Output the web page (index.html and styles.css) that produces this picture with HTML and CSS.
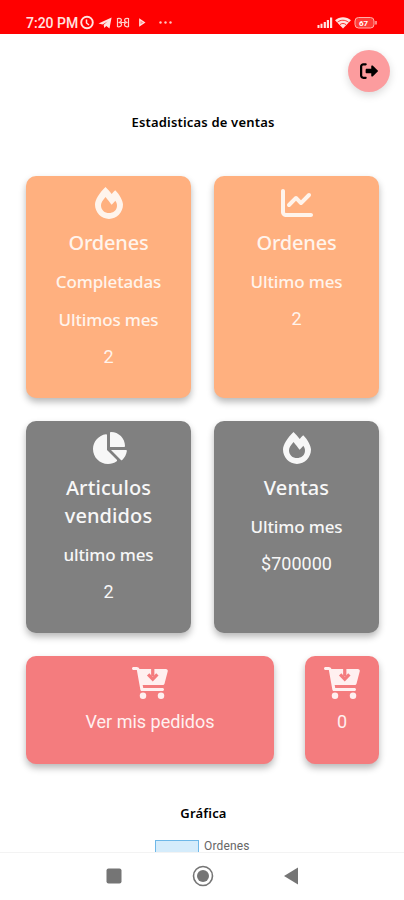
FILE: index.html
```html
<!DOCTYPE html>
<html lang="es">
<head>
<meta charset="utf-8">
<title>Estadisticas de ventas</title>
<link rel="stylesheet" href="styles.css">
</head>
<body>
<svg class="defs" width="0" height="0">
  <symbol id="fire" viewBox="0 0 448 512"><path fill-rule="evenodd" d="M323.5 51.25C302.8 70.5 284 90.75 267.4 111.1C240.1 73.62 206.2 35.5 168 0C69.75 91.12 0 210 0 281.6C0 408.9 100.2 512 224 512s224-103.1 224-230.4C448 228.4 396 118.5 323.5 51.25zM304.1 391.9C282.4 407 255.8 416 226.9 416c-72.13 0-130.9-47.73-130.9-125.2c0-38.63 24.24-72.64 72.74-130.8c7 8 98.88 125.4 98.88 125.4l58.63-66.88c4.125 6.75 7.867 13.52 11.24 19.9C364.9 290.6 353.4 357.4 304.1 391.9z"/></symbol>
  <symbol id="line" viewBox="0 0 512 512"><path d="M64 400C64 408.8 71.16 416 80 416H480C497.7 416 512 430.3 512 448C512 465.7 497.7 480 480 480H80C35.82 480 0 444.2 0 400V64C0 46.33 14.33 32 32 32C49.67 32 64 46.33 64 64V400zM342.6 278.6C330.1 291.1 309.9 291.1 297.4 278.6L240 221.3L150.6 310.6C138.1 323.1 117.9 323.1 105.4 310.6C92.88 298.1 92.88 277.9 105.4 265.4L217.4 153.4C229.9 140.9 250.1 140.9 262.6 153.4L320 210.7L425.4 105.4C437.9 92.88 458.1 92.88 470.6 105.4C483.1 117.9 483.1 138.1 470.6 150.6L342.6 278.6z"/></symbol>
  <symbol id="pie" viewBox="0 0 576 512"><path d="M304 16.58C304 7.555 310.1 0 320 0C443.7 0 544 100.3 544 224C544 233 536.4 240 527.4 240H304V16.58zM32 272C32 150.7 122.1 50.03 239.1 34.25C248.4 32.99 256 40.36 256 49.66V288L412.5 444.5C419.2 451.2 418.7 462.2 411 467.7C371.8 495.6 323.8 512 272 512C139.5 512 32 404.6 32 272zM558.4 288C567.6 288 575 295.6 573.8 304.9C566.1 360.9 539.1 410.6 499.9 447.3C493.9 452.1 484.5 452.5 478.7 446.7L320 288H558.4z"/></symbol>
  <symbol id="cart" viewBox="0 0 576 512"><path d="M0 24C0 10.700 10.700 0 24 0H76c20 0 38 12 43 32h422c22 0 35 16 31 34l-52 200c-4 14-16 22-30 22H170.700l9 48H488c13.300 0 24 10.700 24 24s-10.700 24-24 24H158c-12 0-21-8-24-20L77.400 48H24C10.700 48 0 37.300 0 24z"/><circle cx="176" cy="460" r="52"/><circle cx="464" cy="460" r="52"/><path class="cart-arrow" d="M332 26V150"/><path class="cart-arrow" d="M258 118l74 76 74-76"/></symbol>
</svg>

<header class="status">
  <span class="clock">7:20 PM</span>
  <svg class="left-icons" width="98" height="16" viewBox="0 0 98 16">
    <circle cx="8" cy="7.500" r="5.800" fill="none" stroke="#ffe3e0" stroke-width="1.900"/>
    <path d="M7.500 4.500V8l2.500 2" fill="none" stroke="#ffe3e0" stroke-width="1.500"/>
    <path d="M19.500 8.400 32.600 2.500 30.500 13.400 27.300 11 25.300 13 24.600 9.800 28.800 6.200 23.600 9.600z" fill="#ffe3e0"/>
    <path d="M38.500 3v9M38.500 3.500c5-1 5 3.500 1 4 4.500 0 4 5-1 4.200M49.500 3v9M49.500 3.500c-5-1-5 3.500-1 4-4.500 0-4 5 1 4.200M42 7.500h4" fill="none" stroke="#ffd0cc" stroke-width="1.200"/>
    <path d="M60.800 4.500v6l4.500-3z" fill="#ff8d88" stroke="#ffe3e0" stroke-width="1.300"/>
    <g fill="#ffc5c0"><circle cx="81.500" cy="7.500" r="1.200"/><circle cx="86.500" cy="7.500" r="1.200"/><circle cx="91.500" cy="7.500" r="1.200"/></g>
  </svg>
  <svg class="right-icons" width="62" height="16" viewBox="0 0 62 16">
    <g fill="#ffe3e0"><path d="M.5 10h2v3h-2zM3.500 8.800h2V13h-2zM6.700 7h2.200v6H6.700zM9.800 5H12v8H9.800zM13 2.500h2.200V13H13z"/>
    <path d="M18 5.200C22.500 1.200 29.500 1.200 34 5.200L26 13.500z"/></g>
    <path d="M20.500 7.200c3-2.600 7.500-2.600 11 0M23 9.600c1.800-1.500 4-1.500 6 0" fill="none" stroke="#f00" stroke-width=".8"/>
    <rect x="38" y="2.500" width="19" height="10.500" rx="3.500" fill="#ff3a35" stroke="#ffb0aa"/>
    <path d="M59 6v3.500" stroke="#ffb0aa" stroke-width="1.500"/>
    <text x="46.500" y="11" text-anchor="middle" class="battery">67</text>
  </svg>
</header>

<main class="page">
  <button class="logout" aria-label="Salir">
    <svg width="18" height="18" viewBox="0 0 512 512"><path d="M96 480h64c17.700 0 32-14.300 32-32s-14.300-32-32-32H96c-17.700 0-32-14.300-32-32V128c0-17.700 14.300-32 32-32h64c17.700 0 32-14.300 32-32s-14.300-32-32-32H96C43 32 0 75 0 128V384c0 53 43 96 96 96zM504.500 273.400c4.800-4.500 7.500-10.800 7.500-17.400s-2.700-12.900-7.500-17.400l-144-136c-7-6.600-17.200-8.400-26-4.600s-14.500 12.500-14.500 22v72H192c-17.700 0-32 14.300-32 32v64c0 17.700 14.300 32 32 32H320v72c0 9.600 5.700 18.200 14.500 22s19 2 26-4.600l144-136z"/></svg>
  </button>
  <h1 class="title">Estadisticas de ventas</h1>

  <section class="grid">
    <article class="card orange">
      <svg class="icon" width="28" height="32"><use href="#fire"/></svg>
      <h2>Ordenes</h2>
      <h3>Completadas</h3>
      <h3>Ultimos mes</h3>
      <p>2</p>
    </article>
    <article class="card orange">
      <svg class="icon" width="32" height="32"><use href="#line"/></svg>
      <h2>Ordenes</h2>
      <h3>Ultimo mes</h3>
      <p>2</p>
    </article>
    <article class="card gray">
      <svg class="icon" width="36" height="32"><use href="#pie"/></svg>
      <h2 class="sold">Articulos<br>vendidos</h2>
      <h3>ultimo mes</h3>
      <p>2</p>
    </article>
    <article class="card gray">
      <svg class="icon" width="28" height="32"><use href="#fire"/></svg>
      <h2 class="sold">Ventas</h2>
      <h3>Ultimo mes</h3>
      <p>$700000</p>
    </article>
  </section>

  <section class="orders">
    <article class="card red">
      <svg class="icon" width="36" height="32"><use href="#cart"/></svg>
      <p>Ver mis pedidos</p>
    </article>
    <article class="card red">
      <svg class="icon" width="36" height="32"><use href="#cart"/></svg>
      <p>0</p>
    </article>
  </section>

  <h1 class="title chart-title">Gráfica</h1>
  <div class="legend"><span class="swatch"></span><span>Ordenes</span></div>
</main>

<nav class="nav">
  <svg width="16" height="16"><rect x=".5" y=".5" width="15" height="15" rx="2" fill="#757575"/></svg>
  <svg width="22" height="22"><circle cx="11" cy="11" r="9.500" fill="none" stroke="#757575" stroke-width="1.600"/><circle cx="11" cy="11" r="6" fill="#757575"/></svg>
  <svg width="16" height="18"><path d="M15 .5v17L1 9z" fill="#757575"/></svg>
</nav>
</body>
</html>
```
FILE: styles.css
```css
* { box-sizing: border-box; }
body {
  margin: 0;
  width: 404px;
  height: 900px;
  overflow: hidden;
  display: flex;
  flex-direction: column;
  background: #fff;
  font-family: "Noto Sans", sans-serif;
}
svg { display: block; flex: none; }
.defs { position: absolute; }
.status {
  flex: none;
  height: 34px;
  padding: 7px 25px 0 26px;
  display: flex;
  align-items: flex-start;
  background: #f00;
  color: #ffe3e0;
}
.clock {
  width: 53px;
  margin-top: 8px;
  font: 500 14px/17px Roboto, sans-serif;
  white-space: nowrap;
}
.left-icons { margin-top: 8px; }
.right-icons { margin: 8px 0 0 auto; }
.battery { font: 700 8px Roboto, sans-serif; fill: #fff; }

.page {
  flex: none;
  height: 818px;
  overflow: hidden;
  display: flex;
  flex-direction: column;
}
.logout {
  flex: none;
  align-self: flex-end;
  width: 42px;
  height: 42px;
  margin: 16px 14px 0 0;
  padding: 0;
  display: flex;
  align-items: center;
  justify-content: center;
  border: 0;
  border-radius: 50%;
  background: #fc9c9e;
  box-shadow: 0 3px 8px rgba(0, 0, 0, .15);
}
.title {
  flex: none;
  margin: 20px 0 0;
  padding-left: 2px;
  text-align: center;
  font-size: 13px;
  line-height: 20px;
  font-weight: 600;
  letter-spacing: .18px;
  color: #000;
}
.grid {
  flex: none;
  margin: 44px 25px 0 26px;
  display: grid;
  grid-template-columns: 165px 165px;
  grid-template-rows: 222px 212px;
  gap: 23px;
}
.card {
  padding-top: 11px;
  display: flex;
  flex-direction: column;
  align-items: center;
  border-radius: 10px;
  color: #f7f7f7;
  fill: currentColor;
  text-align: center;
  box-shadow: 0 4px 7px rgba(0, 0, 0, .28);
}
.orange { background: #ffb07f; color: #fff4ec; }
.gray { background: #808080; }
.red { background: #f47c7e; color: #fff0f0; }
.cart-arrow { fill: none; stroke: #f47c7e; stroke-width: 52; }
.card h2 {
  margin: 10px 0 0;
  font-size: 20px;
  line-height: 28px;
  font-weight: 500;
  letter-spacing: -.2px;
}
.card .sold { letter-spacing: .1px; }
.card h3 {
  margin: 14px 0 0;
  font-size: 17px;
  line-height: 24px;
  font-weight: 500;
  letter-spacing: -.15px;
}
.card h2 + h3 { margin-top: 13px; }
.card p {
  margin: 13px 0 0;
  font: 400 18px/24px Roboto, sans-serif;
}
.card.red p { margin-top: 11px; }
.orders {
  flex: none;
  margin: 23px 25px 0 26px;
  height: 108px;
  display: grid;
  grid-template-columns: 248px 74px;
  justify-content: space-between;
}
.chart-title { margin-top: 39px; padding-left: 3px; }
.legend {
  flex: none;
  margin: 17px 0 0 155px;
  display: flex;
  gap: 5px;
  align-items: flex-start;
  font: 12px/12px Roboto, sans-serif;
  letter-spacing: .15px;
  color: #666;
}
.swatch {
  width: 44px;
  height: 14px;
  border: 1.500px solid #6fb8e8;
  background: #d5ecfb;
}
.nav {
  flex: 1;
  padding: 0 105px 2px 106px;
  display: flex;
  align-items: center;
  justify-content: space-between;
  border-top: 1px solid #f3f3f3;
}
```
